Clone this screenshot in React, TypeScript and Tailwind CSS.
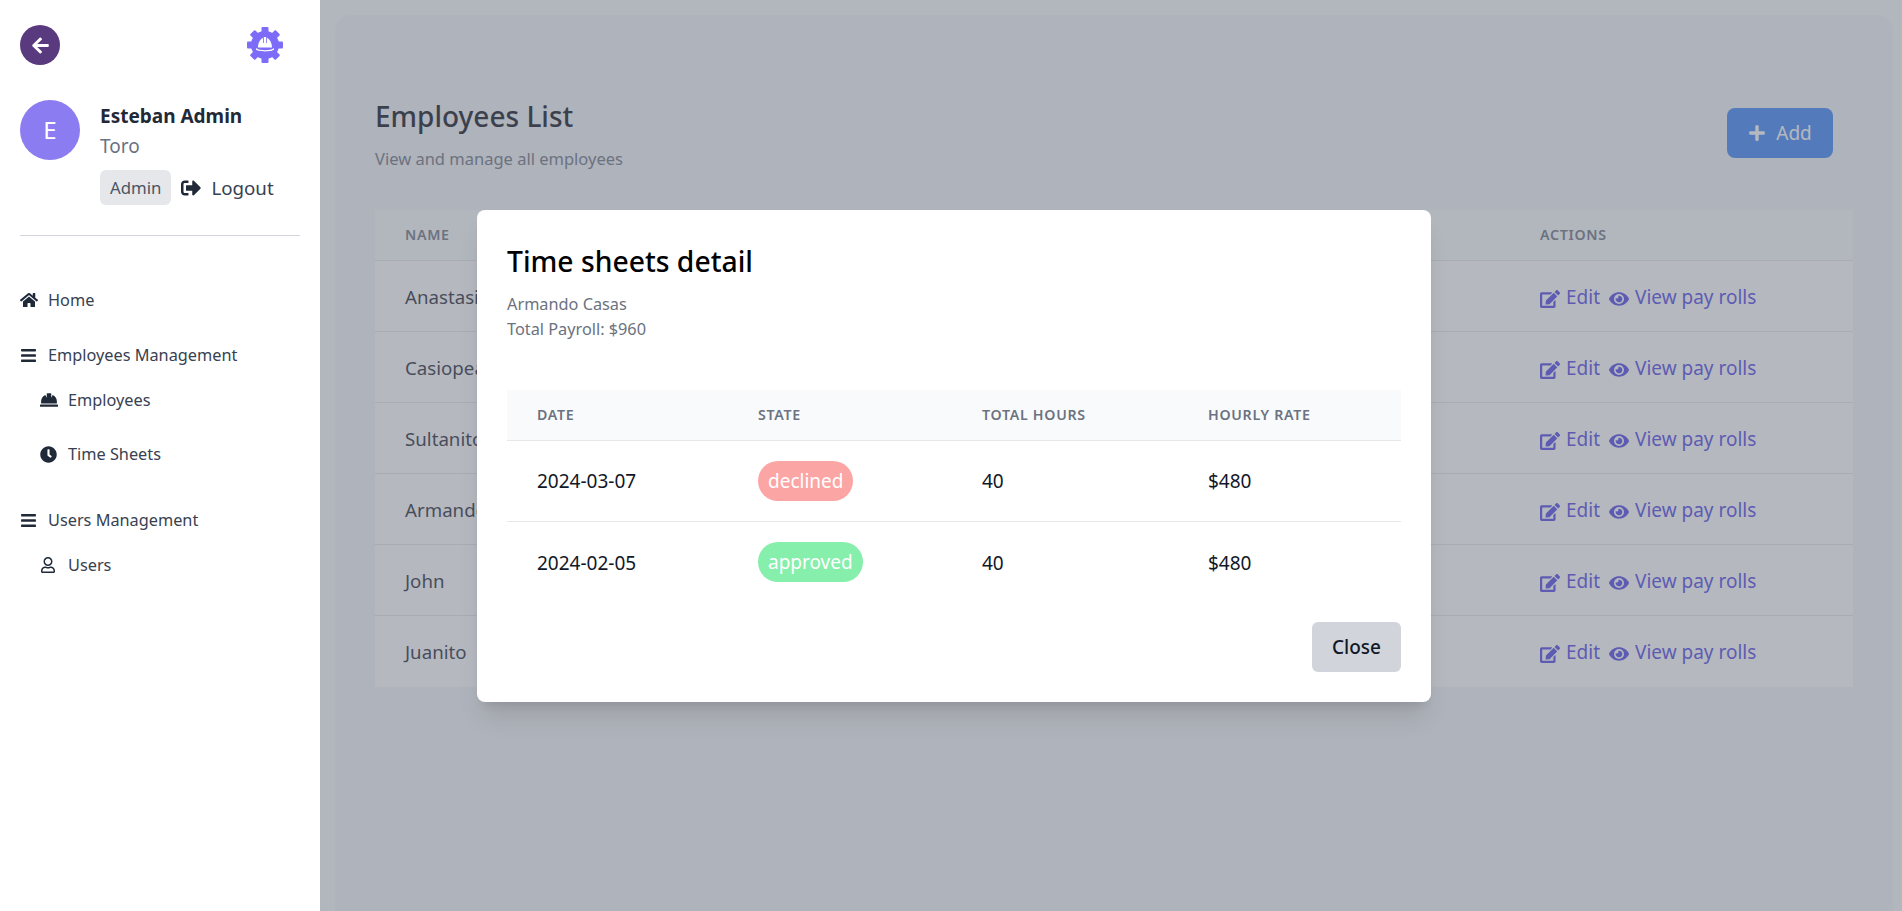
import { FaArrowLeft, FaBars, FaClock, FaEdit, FaEye, FaHardHat, FaHome, FaPlus, FaRegUser, FaSignOutAlt } from 'react-icons/fa';

const font = 'font-["Noto_Sans","Open_Sans",sans-serif]';

const employees = ['Anastasia', 'Casiopea', 'Sultanito', 'Armando', 'John', 'Juanito'];

const timeSheets = [
  { date: '2024-03-07', state: 'declined', hours: 40, rate: '$480' },
  { date: '2024-02-05', state: 'approved', hours: 40, rate: '$480' },
];

function Logo() {
  const teeth = [0, 45, 90, 135, 180, 225, 270, 315];
  return (
    <svg viewBox="0 0 36 36" className="h-[36px] w-[36px]">
      <circle cx="18" cy="18" r="14" fill="#7c6cf8" />
      {teeth.map((deg) => (
        <rect key={deg} x="14.5" y="0" width="7" height="8" rx="1" fill="#7c6cf8" transform={`rotate(${deg} 18 18)`} />
      ))}
      <path d="M11 20.500C11 15 14 11.500 16 11V16H16.800V10H19.200V16H20V11C22 11.500 25 15 25 20.500Z" fill="#fff" />
      <path d="M9 21C12 24 24 24 27 21V22.500C25 25 11 25 9 22.500Z" fill="#fff" />
    </svg>
  );
}

function NavItem({ icon, label, sub }: { icon: React.ReactNode; label: string; sub?: boolean }) {
  return (
    <div className={`flex items-center text-[16.3px] leading-[24px] text-[#374151] ${sub ? 'pl-[20px]' : ''}`}>
      <span className="flex w-[28px] shrink-0 text-[#1f2937]">{icon}</span>
      <span>{label}</span>
    </div>
  );
}

function Sidebar() {
  return (
    <aside className="relative z-20 flex h-full w-[320px] shrink-0 flex-col bg-white px-[20px]">
      <div className="flex items-center justify-between pt-[25px] pr-[17px]">
        <button className="flex h-[40px] w-[40px] items-center justify-center rounded-full bg-[#5a3a7e] text-white">
          <FaArrowLeft size={19} />
        </button>
        <Logo />
      </div>
      <div className="mt-[35px] flex gap-[20px]">
        <div className="flex h-[60px] w-[60px] items-center justify-center rounded-full bg-[#8b7cf2] text-[24px] text-white">E</div>
        <div className="pt-[1px]">
          <div className="text-[19px] leading-[30px] font-bold text-[#1f2937]">Esteban Admin</div>
          <div className="text-[19px] leading-[30px] text-[#6b7280]">Toro</div>
          <div className="mt-[9px] flex items-center gap-[10px]">
            <span className="rounded-md bg-[#e5e7eb] px-[10px] py-[5.5px] text-[16.8px] leading-[24px] text-[#4b5563]">Admin</span>
            <span className="flex items-center gap-[10px] pt-[1px] text-[18.7px] text-[#374151]">
              <FaSignOutAlt size={20} className="text-[#1f2937]" />
              Logout
            </span>
          </div>
        </div>
      </div>
      <div className="mt-[30px] border-t border-[#d1d5db]" />
      <nav className="mt-[52px] flex flex-col">
        <NavItem icon={<FaHome size={18} />} label="Home" />
        <div className="mt-[31px]"><NavItem icon={<FaBars size={17} />} label="Employees Management" /></div>
        <div className="mt-[21px]"><NavItem sub icon={<FaHardHat size={18} />} label="Employees" /></div>
        <div className="mt-[30px]"><NavItem sub icon={<FaClock size={17} />} label="Time Sheets" /></div>
        <div className="mt-[42px]"><NavItem icon={<FaBars size={17} />} label="Users Management" /></div>
        <div className="mt-[21px]"><NavItem sub icon={<FaRegUser size={16} />} label="Users" /></div>
      </nav>
    </aside>
  );
}

function EmployeesPage() {
  return (
    <main className="h-full flex-1 bg-[#f9fafb] pt-[15px] pr-[9px] pl-[15px]">
      <div className="h-full rounded-t-2xl bg-[#f3f4f6] px-[40px] pt-[83px]">
        <div className="flex items-start justify-between pr-[20px]">
          <div>
            <h1 className="text-[28px] leading-[36px] font-medium text-[#0b0f19]">Employees List</h1>
            <p className="mt-[13px] text-[16.5px] leading-[24px] text-[#6b7280]">View and manage all employees</p>
          </div>
          <button className="mt-[10px] flex h-[50px] w-[106px] items-center justify-center gap-[10px] rounded-lg bg-[#3b82f6] text-[19px] text-white">
            <FaPlus size={18} />
            Add
          </button>
        </div>
        <div className="mt-[39px] bg-white">
          <div className="flex h-[51px] items-center justify-between border-b border-[#e5e7eb] bg-[#f9fafb] px-[30px] text-[14.2px] font-semibold tracking-wider text-[#6b7280] uppercase">
            <span>Name</span>
            <span className="w-[283px]">Actions</span>
          </div>
          {employees.map((name) => (
            <div key={name} className="flex h-[71px] items-center justify-between border-b border-[#e5e7eb] px-[30px] pt-[2px] text-[18.7px] text-[#1f2937] last:border-b-0">
              <span>{name}</span>
              <span className="flex w-[283px] items-center text-[19px] text-[#4f46e5]">
                <FaEdit size={20} className="mt-[3px]" />
                <span className="ml-[6px]">Edit</span>
                <FaEye size={20} className="mt-[3px] ml-[9px]" />
                <span className="ml-[6px]">View pay rolls</span>
              </span>
            </div>
          ))}
        </div>
      </div>
    </main>
  );
}

function TimeSheetsModal() {
  return (
    <div className="absolute inset-0 z-10 bg-[#6b7280]/50">
      <div className="absolute top-[210px] left-[477px] w-[954px] rounded-lg bg-white px-[30px] pt-[29px] pb-[30px] text-black shadow-xl">
        <h2 className="text-[28.3px] leading-[44px] font-medium">Time sheets detail</h2>
        <p className="mt-[9px] text-[16.3px] leading-[25px] text-[#6b7280]">
          Armando Casas
          <br />
          Total Payroll: $960
        </p>
        <table className="mt-[48px] w-full table-fixed border-collapse text-left">
          <thead>
            <tr className="h-[50px] border-b border-[#e5e7eb] bg-[#f9fafb] text-[14.2px] tracking-wider text-[#6b7280] uppercase">
              <th className="w-[221px] pl-[30px] font-semibold">Date</th>
              <th className="w-[224px] pl-[30px] font-semibold">State</th>
              <th className="w-[226px] pl-[30px] font-semibold">Total Hours</th>
              <th className="pl-[30px] font-semibold">Hourly Rate</th>
            </tr>
          </thead>
          <tbody className="text-[19px] text-[#111827]">
            {timeSheets.map((row) => (
              <tr key={row.date} className="h-[81px] border-b border-[#e5e7eb] last:border-b-0">
                <td className="pt-[2px] pl-[30px]">{row.date}</td>
                <td className="pl-[30px]">
                  <span className={`inline-block h-[40px] rounded-full px-[10px] leading-[40px] text-white ${row.state === 'declined' ? 'bg-[#fca5a5]' : 'bg-[#86efac]'}`}>
                    {row.state}
                  </span>
                </td>
                <td className="pt-[2px] pl-[30px]">{row.hours}</td>
                <td className="pt-[2px] pl-[30px]">{row.rate}</td>
              </tr>
            ))}
          </tbody>
        </table>
        <div className="mt-[20px] flex justify-end">
          <button className="h-[50px] w-[89px] rounded-md bg-[#d1d5db] text-[19px] font-medium text-[#111827]">Close</button>
        </div>
      </div>
    </div>
  );
}

export default function App() {
  return (
    <div className={`relative flex h-[911px] w-full overflow-hidden bg-white ${font}`}>
      <Sidebar />
      <EmployeesPage />
      <TimeSheetsModal />
    </div>
  );
}
